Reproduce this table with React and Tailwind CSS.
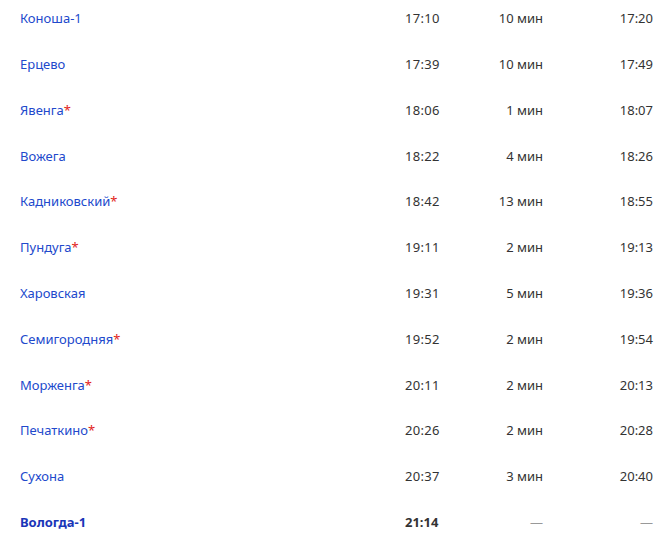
const stops = [
  { name: 'Коноша-1', arr: '17:10', stay: '10 мин', dep: '17:20' },
  { name: 'Ерцево', arr: '17:39', stay: '10 мин', dep: '17:49' },
  { name: 'Явенга', star: true, arr: '18:06', stay: '1 мин', dep: '18:07' },
  { name: 'Вожега', arr: '18:22', stay: '4 мин', dep: '18:26' },
  { name: 'Кадниковский', star: true, arr: '18:42', stay: '13 мин', dep: '18:55' },
  { name: 'Пундуга', star: true, arr: '19:11', stay: '2 мин', dep: '19:13' },
  { name: 'Харовская', arr: '19:31', stay: '5 мин', dep: '19:36' },
  { name: 'Семигородняя', star: true, arr: '19:52', stay: '2 мин', dep: '19:54' },
  { name: 'Морженга', star: true, arr: '20:11', stay: '2 мин', dep: '20:13' },
  { name: 'Печаткино', star: true, arr: '20:26', stay: '2 мин', dep: '20:28' },
  { name: 'Сухона', arr: '20:37', stay: '3 мин', dep: '20:40' },
];

export default function App() {
  return (
    <div className="w-[671px] h-[535px] bg-white overflow-hidden font-['Noto_Sans',sans-serif] text-[13px] text-[#333]">
      <div className="-mt-[4px]">
        {stops.map((s) => (
          <div key={s.name} className="flex items-center h-[45.8px]">
            <div className="w-[381px] pl-5 text-[#2149cc]">
              {s.name}
              {s.star && <span className="text-[#e2231a]">*</span>}
            </div>
            <div className="w-[80px] pl-6 tracking-[0.3px]">{s.arr}</div>
            <div className="w-[82px] text-right">{s.stay}</div>
            <div className="w-[110px] text-right">{s.dep}</div>
          </div>
        ))}
        <div className="flex items-center h-[45.8px] font-bold">
          <div className="w-[381px] pl-5 text-[#1a35b8]">Вологда-1</div>
          <div className="w-[80px] pl-6">21:14</div>
          <div className="w-[82px] text-right font-normal text-[#999]">—</div>
          <div className="w-[110px] text-right font-normal text-[#999]">—</div>
        </div>
      </div>
    </div>
  );
}
